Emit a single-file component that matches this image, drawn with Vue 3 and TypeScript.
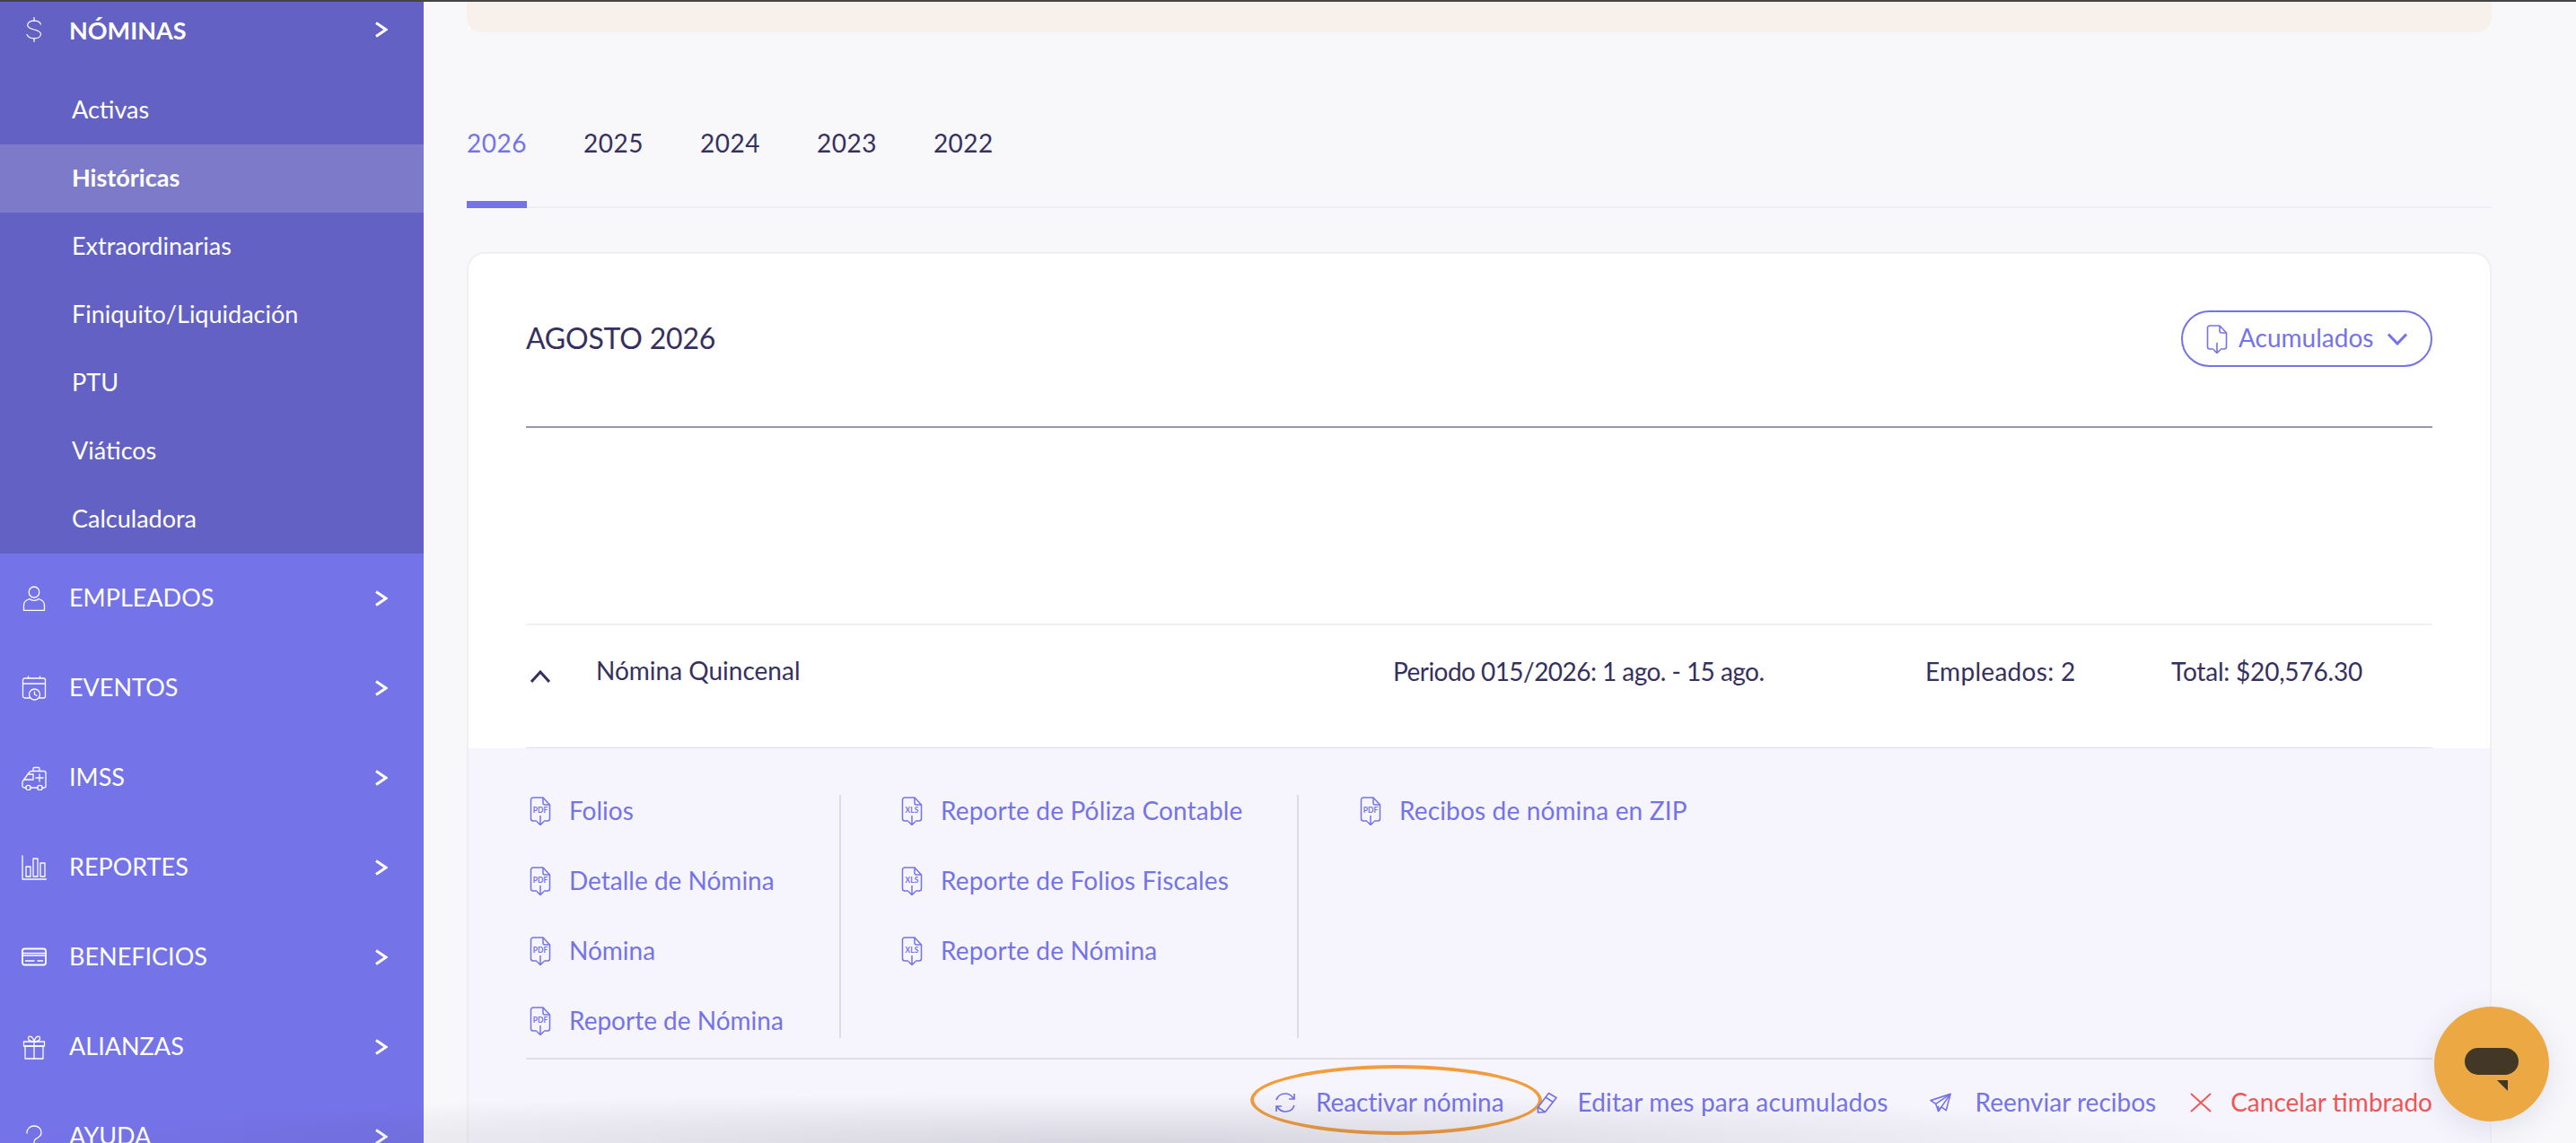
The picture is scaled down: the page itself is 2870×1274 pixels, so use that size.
<script setup lang="ts">
const subItems = ['Activas', 'Históricas', 'Extraordinarias', 'Finiquito/Liquidación', 'PTU', 'Viáticos', 'Calculadora']
const navItems = ['EMPLEADOS', 'EVENTOS', 'IMSS', 'REPORTES', 'BENEFICIOS', 'ALIANZAS', 'AYUDA']
const years = ['2026', '2025', '2024', '2023', '2022']

const columns = [
  { type: 'PDF', items: ['Folios', 'Detalle de Nómina', 'Nómina', 'Reporte de Nómina'] },
  { type: 'XLS', items: ['Reporte de Póliza Contable', 'Reporte de Folios Fiscales', 'Reporte de Nómina'] },
  { type: 'PDF', items: ['Recibos de nómina en ZIP'] }
]
</script>

<template>
  <div class="screen">
    <div class="topline"></div>
    <div class="shell">
      <aside class="sidebar">
        <div class="group">
          <div class="group-head">
            <svg class="nav-icon" viewBox="0 0 28 28" fill="none" stroke="#fff" stroke-width="1.2" stroke-linecap="round">
              <path d="M21.500 8C20.300 5.500 17.500 4.200 14 4.200C9.500 4.200 6.700 6.300 6.700 9C6.700 11.800 10 13 14 14C18 15 21.500 16.200 21.500 19C21.500 21.700 18.500 23.800 14 23.800C10 23.800 7.300 22.300 6 19.500" />
              <path d="M14 0.500V4.200M14 23.800V27.500" />
            </svg>
            <span class="group-title">NÓMINAS</span>
            <svg class="chevron" viewBox="0 0 14 18" fill="none" stroke="#fff" stroke-width="3"><path d="M1 1.500L12 9L1 16.500" /></svg>
          </div>
          <a v-for="item in subItems" :key="item" class="sub-item" :class="{ active: item === 'Históricas' }">{{ item }}</a>
        </div>

        <div v-for="item in navItems" :key="item" class="nav-row">
          <svg class="nav-icon" viewBox="0 0 28 28" fill="none" stroke="#fff" stroke-width="1.300" stroke-linejoin="round" stroke-linecap="round">
            <g v-if="item === 'EMPLEADOS'">
              <ellipse cx="14" cy="7" rx="5.800" ry="6" />
              <path d="M2.500 27.500V21.500C2.500 17.500 6 15.500 9 14.500C11 17 17 17 19 14.500C22 15.500 25.500 17.500 25.500 21.500V27.500Z" />
            </g>
            <g v-else-if="item === 'EVENTOS'">
              <path d="M9 25H3.500A2 2 0 0 1 1.500 23V5A2 2 0 0 1 3.500 3H24.500A2 2 0 0 1 26.500 5V23A2 2 0 0 1 24.500 25H20" />
              <path d="M1.500 9H26.500M7.500 1V3M20.500 1V3" />
              <circle cx="14.500" cy="21" r="6" />
              <path d="M14.500 18V21L17 22.500" />
            </g>
            <g v-else-if="item === 'IMSS'">
              <path d="M5 25H3A2 2 0 0 1 1 23V19C1 17.500 2 16.500 3 15.500L8.500 8C9 7 10 6.500 11.500 6.500H25A2 2 0 0 1 27 8.500V23A2 2 0 0 1 25 25H23M10 25H18" />
              <circle cx="7.500" cy="25" r="2.700" /><circle cx="20.500" cy="25" r="2.700" />
              <path d="M3 16H13V10H8M20 10V18M16 14H24M13 6.500V3.500A1 1 0 0 1 14 2.500H19A1 1 0 0 1 20 3.500V6.500" />
            </g>
            <g v-else-if="item === 'REPORTES'">
              <path d="M1 1V27H27.500" />
              <rect x="5" y="13" width="5" height="11" /><rect x="13" y="4" width="5" height="20" /><rect x="21" y="9" width="5" height="15" />
            </g>
            <g v-else-if="item === 'BENEFICIOS'">
              <rect x="1" y="4.500" width="26" height="18" rx="2.500" stroke-width="1.800" />
              <path d="M1 9.500H27M1 12H27" stroke-width="1.500" />
              <path d="M4.500 18H14M18 18H23.500" stroke-width="1.500" />
            </g>
            <g v-else-if="item === 'ALIANZAS'">
              <rect x="4" y="13" width="20" height="14" />
              <rect x="2.500" y="8" width="23" height="5" />
              <path d="M14 8V27M14 8C10 8 7 6.500 7.500 3.800C8 1 12.500 1.500 14 8ZM14 8C18 8 21 6.500 20.500 3.800C20 1 15.500 1.500 14 8Z" />
            </g>
            <g v-else>
              <path d="M6 10C6 5 9.500 2 14 2C18.500 2 22 5 22 9.500C22 14 18 15 15 17C14.500 18 14 19 14 21" />
            </g>
          </svg>
          <span class="nav-label">{{ item }}</span>
          <svg class="chevron" viewBox="0 0 14 18" fill="none" stroke="#fff" stroke-width="3"><path d="M1 1.500L12 9L1 16.500" /></svg>
        </div>
      </aside>

      <main class="content">
        <div class="banner"></div>

        <nav class="tabs">
          <a v-for="year in years" :key="year" class="tab" :class="{ current: year === '2026' }">{{ year }}</a>
        </nav>

        <section class="card">
          <header class="card-head">
            <h2 class="month">AGOSTO 2026</h2>
            <button class="acum-btn">
              <svg class="file-icon" viewBox="0 0 24 32" fill="none" stroke="#7573e8" stroke-width="1.600">
                <path d="M8 27H4A2.500 2.500 0 0 1 1.500 24.500V3.500A2.500 2.500 0 0 1 4 1H15L22.500 9V24.500A2.500 2.500 0 0 1 20 27H16" />
                <path d="M15 1V7A2 2 0 0 0 17 9H22.500M12 20V31M8 27.500L12 31.500L16 27.500" />
              </svg>
              <span>Acumulados</span>
              <svg class="acum-chevron" viewBox="0 0 22 14" fill="none" stroke="#7573e8" stroke-width="3"><path d="M1 1.500L11 12L21 1.500" /></svg>
            </button>
          </header>

          <div class="payroll-row">
            <svg class="up-chevron" viewBox="0 0 22 14" fill="none" stroke="#36305f" stroke-width="3"><path d="M1 13L11 2L21 13" /></svg>
            <span class="payroll-name">Nómina Quincenal</span>
            <span class="payroll-period">Periodo 015/2026: 1 ago. - 15 ago.</span>
            <span class="payroll-count">Empleados: 2</span>
            <span class="payroll-total">Total: $20,576.30</span>
          </div>

          <div class="panel">
            <div class="downloads">
              <div v-for="(col, i) in columns" :key="i" class="dl-col">
                <a v-for="item in col.items" :key="item" class="dl-item">
                  <svg class="file-icon" viewBox="0 0 24 32" fill="none" stroke="#7573e8" stroke-width="1.500">
                    <path d="M8 27H4A2.500 2.500 0 0 1 1.500 24.500V3.500A2.500 2.500 0 0 1 4 1H15L22.500 9V24.500A2.500 2.500 0 0 1 20 27H16" />
                    <path d="M15 1V7A2 2 0 0 0 17 9H22.500M12 21V31M8 27.500L12 31.500L16 27.500" />
                    <text x="12" y="18" class="file-type">{{ col.type }}</text>
                  </svg>
                  <span class="dl-label">{{ item }}</span>
                </a>
              </div>
            </div>

            <div class="actions">
              <a class="action reactivate">
                <span class="highlight"></span>
                <svg class="action-icon" viewBox="0 0 26 26" fill="none" stroke="#7573e8" stroke-width="1.700">
                  <path d="M3 10C4.500 5.500 8.500 3 13 3C17 3 20 5 22 8.500M23 3V9H17" />
                  <path d="M23 16C21.500 20.500 17.500 23 13 23C9 23 6 21 4 17.500M3 23V17H9" />
                </svg>
                <span>Reactivar nómina</span>
              </a>
              <a class="action edit">
                <svg class="action-icon" viewBox="0 0 24 24" fill="none" stroke="#7573e8" stroke-width="1.700" stroke-linejoin="round">
                  <path d="M1.500 23V17L13.500 1.500L22 6.500L9.500 22.500Z" />
                  <path d="M10 6L18.500 11.500M1.500 17L9.500 22.500" />
                </svg>
                <span>Editar mes para acumulados</span>
              </a>
              <a class="action resend">
                <svg class="action-icon" viewBox="0 0 25 22" fill="none" stroke="#7573e8" stroke-width="1.700" stroke-linejoin="round">
                  <path d="M24 1L1 8.500L7 12.500L10 21L13.500 16L19 20Z" />
                  <path d="M24 1L7 12.500M24 1L10 21M10 21V15" />
                </svg>
                <span>Reenviar recibos</span>
              </a>
              <a class="action cancel">
                <svg class="action-icon" viewBox="0 0 24 22" fill="none" stroke="#ee5555" stroke-width="1.800"><path d="M1 1L23 21M23 1L1 21" /></svg>
                <span>Cancelar timbrado</span>
              </a>
            </div>
          </div>
        </section>
      </main>
    </div>

    <div class="bottom-shade"></div>
    <button class="chat">
      <span class="chat-bubble"></span>
      <svg class="chat-tail" viewBox="0 0 12 12"><path d="M0 0H12V12Z" fill="#433725" /></svg>
    </button>
  </div>
</template>

<style>
html, body {
  margin: 0;
  background: #f8f8fb;
}
</style>

<style scoped>
.screen {
  position: relative;
  width: 2870px;
  height: 1274px;
  overflow: hidden;
  background: #f8f8fb;
  font-family: Lato, "Liberation Sans", sans-serif;
  font-size: 28px;
}

.topline {
  height: 2px;
  background: #454545;
}

.shell {
  display: flex;
  height: 1272px;
}

.sidebar {
  width: 472px;
  flex-shrink: 0;
  background: #7573e8;
  color: #fff;
  font-size: 27px;
}

.group {
  background: #6361c4;
}

.group-head {
  display: flex;
  align-items: center;
  height: 83px;
  padding: 0 40px 21px 24px;
  box-sizing: border-box;
}

.nav-icon {
  width: 28px;
  height: 28px;
  flex-shrink: 0;
}

.group-title {
  margin-left: 25px;
  font-weight: 700;
}

.chevron {
  width: 14px;
  height: 18px;
  margin-left: auto;
}

.sub-item {
  display: flex;
  align-items: center;
  height: 76px;
  padding-left: 80px;
  padding-bottom: 4px;
  box-sizing: border-box;
}

.sub-item.active {
  background: #7d7bc9;
  font-weight: 700;
}

.nav-row {
  display: flex;
  align-items: center;
  height: 100px;
  padding: 0 40px 0 24px;
  box-sizing: border-box;
}

.nav-label {
  margin: -3px 0 0 25px;
}

.content {
  flex: 1;
  padding: 0 94px 0 48px;
  min-width: 0;
}

.banner {
  height: 34px;
  background: #f8f0ea;
  border-radius: 0 0 16px 16px;
}

.tabs {
  display: flex;
  align-items: flex-end;
  gap: 63px;
  height: 196px;
  box-sizing: border-box;
  border-bottom: 2px solid #eeedf5;
}

.tab {
  height: 100px;
  margin-bottom: -2px;
  padding-top: 7px;
  box-sizing: border-box;
  color: #36305f;
  line-height: 40px;
  letter-spacing: 0.5px;
}

.tab.current {
  color: #7573e8;
  border-bottom: 8px solid #7573e8;
}

.card {
  margin-top: 49px;
  background: #fff;
  border: 2px solid #efeff3;
  border-bottom: 0;
  border-radius: 20px 20px 0 0;
  height: 1100px;
}

.card-head {
  display: flex;
  align-items: center;
  justify-content: space-between;
  margin: 0 64px;
  padding: 63px 0 66px;
  border-bottom: 2px solid #9896ab;
  height: 194px;
  box-sizing: border-box;
}

.month {
  margin: -3px 0 0;
  color: #36305f;
  font-size: 32px;
  font-weight: 400;
  letter-spacing: -0.2px;
}

.acum-btn {
  display: flex;
  align-items: center;
  width: 280px;
  height: 63px;
  padding: 0 0 0 26px;
  box-sizing: border-box;
  background: #fff;
  border: 2px solid #7573e8;
  border-radius: 32px;
  color: #7573e8;
  font: inherit;
}

.acum-btn span {
  margin: -3px 0 0 12px;
}

.acum-chevron {
  width: 22px;
  height: 14px;
  margin-left: 16px;
}

.file-icon {
  width: 24px;
  height: 32px;
  flex-shrink: 0;
}

.file-type {
  fill: #7573e8;
  stroke: none;
  font-family: Lato, sans-serif;
  font-size: 8.500px;
  font-weight: 700;
  text-anchor: middle;
}

.payroll-row {
  display: grid;
  grid-template-columns: 78px 888px 593px 274px 1fr;
  align-items: center;
  margin: 218px 64px 0;
  height: 140px;
  padding-bottom: 34px;
  box-sizing: border-box;
  border-top: 2px solid #f0f0f3;
  border-bottom: 2px solid #dfdfe8;
  color: #36305f;
}

.up-chevron {
  width: 22px;
  height: 14px;
  margin: 12px 0 0 5px;
}

.payroll-name {
  margin-top: -2px;
}

.payroll-period {
  letter-spacing: -0.55px;
}

.payroll-count {
  letter-spacing: 0.3px;
}

.payroll-total {
  letter-spacing: -0.2px;
}

.panel {
  background: #f6f5fd;
  padding: 0 64px;
  height: 600px;
  margin-top: -1px;
}

.downloads {
  display: flex;
  padding-top: 52px;
}

.dl-col {
  display: flex;
  flex-direction: column;
  gap: 42px;
  height: 271px;
  box-sizing: border-box;
  padding-left: 68px;
  border-left: 2px solid #dcdce6;
}

.dl-col:nth-child(1) {
  width: 349px;
  padding-left: 4px;
  border-left: 0;
}

.dl-col:nth-child(2) {
  width: 510px;
  padding-left: 67px;
}

.dl-item {
  display: flex;
  align-items: center;
  gap: 20px;
  height: 36px;
  color: #7573e8;
}

.dl-label {
  margin-top: -2px;
}

.dl-col:not(:first-child) .dl-label {
  letter-spacing: 0.15px;
}

.actions {
  display: flex;
  justify-content: flex-end;
  align-items: center;
  height: 96px;
  margin-top: 22px;
  border-top: 2px solid #dfdfe8;
  color: #7573e8;
}

.action {
  position: relative;
  display: flex;
  align-items: center;
  gap: 21px;
}

.action span:last-child {
  margin-top: -2px;
}

.action.reactivate {
  letter-spacing: -0.1px;
}

.action.reactivate .action-icon {
  width: 26px;
  height: 26px;
}

.action.edit {
  margin-left: 37px;
  letter-spacing: 0.15px;
}

.action.resend {
  margin-left: 46px;
  gap: 27px;
}

.action.cancel {
  margin-left: 38px;
  color: #ee5555;
}

.action-icon {
  width: 24px;
  height: 24px;
  flex-shrink: 0;
}

.highlight {
  position: absolute;
  left: -26px;
  top: -26px;
  width: 325px;
  height: 78px;
  box-sizing: border-box;
  border: 4px solid #f39c3d;
  border-radius: 50%;
}

.bottom-shade {
  position: absolute;
  left: 0;
  right: 0;
  bottom: 0;
  height: 70px;
  background: radial-gradient(ellipse 1300px 56px at 1260px 100%, rgba(60, 60, 80, 0.17), rgba(60, 60, 80, 0));
  pointer-events: none;
}

.chat {
  position: absolute;
  left: 2712px;
  top: 1122px;
  width: 128px;
  height: 128px;
  padding: 0;
  border: 0;
  border-radius: 50%;
  background: #eca843;
  box-shadow: 0 8px 32px rgba(70, 80, 130, 0.14);
}

.chat-bubble {
  position: absolute;
  left: 34px;
  top: 46px;
  width: 60px;
  height: 30px;
  border-radius: 15px;
  background: #433725;
}

.chat-tail {
  position: absolute;
  left: 70px;
  top: 82px;
  width: 12px;
  height: 12px;
}
</style>
